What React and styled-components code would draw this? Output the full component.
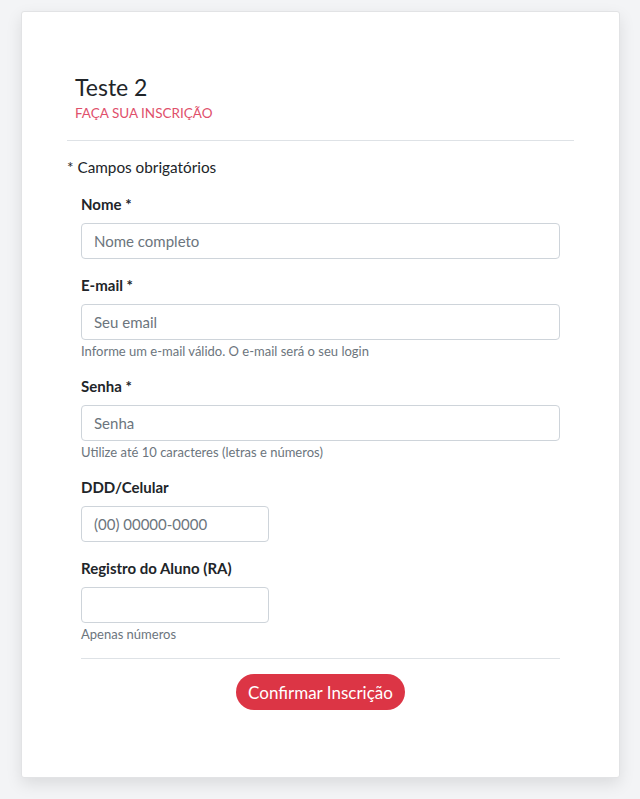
import React from 'react';
import styled, { createGlobalStyle } from 'styled-components';

const GlobalStyle = createGlobalStyle`
  * { box-sizing: border-box; }
  body {
    margin: 0;
    background: #f3f4f6;
    font-family: 'Lato', 'Noto Sans', sans-serif;
    color: #212529;
  }
`;

const Page = styled.div`
  padding: 11px 20px 21px 21px;
`;

const Card = styled.div`
  background: #ffffff;
  border: 1px solid #e2e3e5;
  border-radius: 3px;
  box-shadow: 0 6px 16px rgba(0, 0, 0, 0.1);
  padding: 61px 45px 67px;
`;

const Header = styled.div`
  padding-left: 8px;
`;

const Title = styled.h1`
  margin: 0;
  font-size: 23px;
  line-height: 28px;
  font-weight: 400;
  color: #212529;
`;

const Subtitle = styled.div`
  margin-top: 3px;
  font-size: 13.5px;
  line-height: 18px;
  color: #e0506b;
  text-transform: uppercase;
`;

const Divider = styled.hr`
  margin: ${(p) => p.$mt || 0}px 0 0;
  border: 0;
  border-top: 1px solid #dee2e6;
`;

const Required = styled.div`
  margin-top: 15px;
  font-size: 15.3px;
  line-height: 22px;
`;

const Form = styled.form`
  margin-top: 15px;
  padding: 0 14px;
`;

const Field = styled.div`
  & + & {
    margin-top: 15px;
  }
`;

const Label = styled.label`
  display: block;
  font-size: 15px;
  line-height: 22px;
  font-weight: 700;
  margin-bottom: 8px;
`;

const Input = styled.input`
  display: block;
  width: ${(p) => (p.$small ? '188px' : '100%')};
  height: 36px;
  padding: 0 12px;
  border: 1px solid #ced4da;
  border-radius: 4px;
  font-family: inherit;
  font-size: 15px;
  color: #212529;
  background: #fff;

  &::placeholder {
    color: #6c757d;
  }
`;

const Help = styled.div`
  margin-top: 2px;
  font-size: 13px;
  line-height: 18px;
  color: #6c757d;
`;

const Actions = styled.div`
  display: flex;
  justify-content: center;
  margin-top: 15px;
`;

const Button = styled.button`
  height: 36px;
  padding: 0 12px;
  border: none;
  border-radius: 18px;
  background: #dc3545;
  color: #ffffff;
  font-family: inherit;
  font-size: 17px;
  cursor: pointer;
`;

const fields = [
  { label: 'Nome *', placeholder: 'Nome completo' },
  { label: 'E-mail *', placeholder: 'Seu email', help: 'Informe um e-mail válido. O e-mail será o seu login' },
  { label: 'Senha *', placeholder: 'Senha', help: 'Utilize até 10 caracteres (letras e números)' },
  { label: 'DDD/Celular', placeholder: '(00) 00000-0000', small: true },
  { label: 'Registro do Aluno (RA)', placeholder: '', small: true, help: 'Apenas números' },
];

export default function App() {
  return (
    <>
      <GlobalStyle />
      <Page>
        <Card>
          <Header>
            <Title>Teste 2</Title>
            <Subtitle>Faça sua inscrição</Subtitle>
          </Header>
          <Divider $mt={18} />
          <Required>* Campos obrigatórios</Required>
          <Form onSubmit={(e) => e.preventDefault()}>
            {fields.map((f) => (
              <Field key={f.label}>
                <Label>{f.label}</Label>
                <Input placeholder={f.placeholder} $small={f.small} />
                {f.help && <Help>{f.help}</Help>}
              </Field>
            ))}
            <Divider $mt={15} />
            <Actions>
              <Button type="submit">Confirmar Inscrição</Button>
            </Actions>
          </Form>
        </Card>
      </Page>
    </>
  );
}
